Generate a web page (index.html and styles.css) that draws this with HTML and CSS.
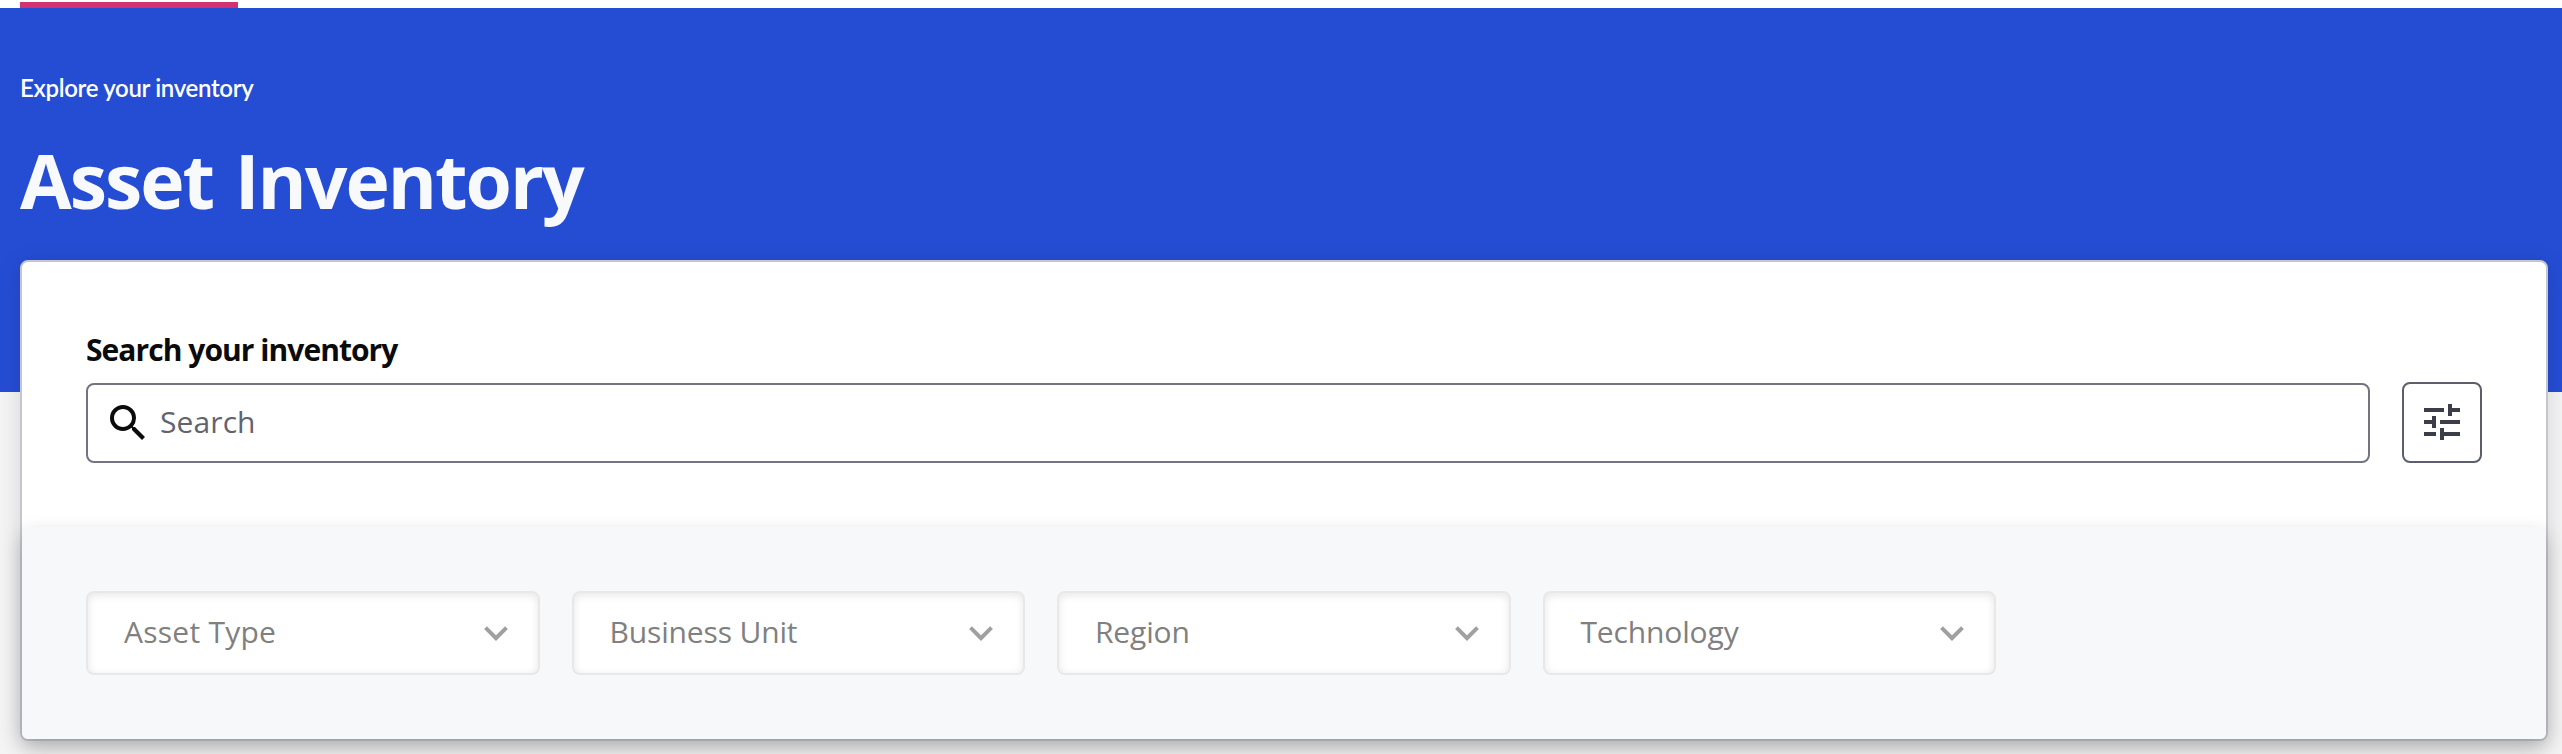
FILE: index.html
```
<!DOCTYPE html>
<html lang="en">
<head>
<meta charset="utf-8">
<title>Asset Inventory</title>
<link rel="stylesheet" href="styles.css">
</head>
<body>
<div class="tabs"><div class="tab-active"></div></div>
<header class="hero">
  <p class="eyebrow">Explore your inventory</p>
  <h1 class="title">Asset Inventory</h1>
</header>
<main class="card">
  <section class="search">
    <label class="label" for="q">Search your inventory</label>
    <div class="search-row">
      <div class="field">
        <svg class="icon" viewBox="0 0 24 24" fill="#0b0b0c"><path d="M15.5 14h-.79l-.28-.27A6.47 6.47 0 0 0 16 9.5 6.5 6.5 0 1 0 9.5 16c1.61 0 3.09-.59 4.23-1.57l.27.28v.79l5 4.99L20.49 19l-4.99-5zm-6 0C7.01 14 5 11.99 5 9.5S7.01 5 9.5 5 14 7.01 14 9.5 11.99 14 9.5 14z"/></svg>
        <input class="input" id="q" type="text" placeholder="Search">
      </div>
      <button class="tune" type="button" aria-label="Filters">
        <svg class="icon" viewBox="0 0 24 24" fill="#3b3d48"><path d="M3 17v2h6v-2H3zM3 5v2h10V5H3zm10 16v-2h8v-2h-8v-2h-2v6h2zM7 9v2H3v2h4v2h2V9H7zm14 4v-2H11v2h10zm-6-4h2V7h4V5h-4V3h-2v6z"/></svg>
      </button>
    </div>
  </section>
  <section class="filters">
    <div class="select"><span class="select-text select-wide">Asset Type</span><svg class="chevron" viewBox="0 0 24 15"><path d="M1.5 1.7 12 12.2 22.500 1.7"/></svg></div>
    <div class="select"><span class="select-text">Business Unit</span><svg class="chevron" viewBox="0 0 24 15"><path d="M1.5 1.7 12 12.2 22.500 1.7"/></svg></div>
    <div class="select"><span class="select-text">Region</span><svg class="chevron" viewBox="0 0 24 15"><path d="M1.5 1.7 12 12.2 22.500 1.7"/></svg></div>
    <div class="select"><span class="select-text">Technology</span><svg class="chevron" viewBox="0 0 24 15"><path d="M1.5 1.7 12 12.2 22.500 1.7"/></svg></div>
  </section>
</main>
</body>
</html>
```
FILE: styles.css
```
* { box-sizing: border-box; }
body {
  margin: 0;
  height: 754px;
  overflow: hidden;
  background: #f4f4f4;
  font-family: "Open Sans", Lato, sans-serif;
}
.tabs { height: 8px; padding: 2px 0 0 20px; background: #fff; }
.tab-active { width: 218px; height: 6px; background: #d0336f; }
.hero { height: 384px; padding: 65px 20px 0; background: #254dd4; }
.eyebrow {
  margin: 0 0 32px;
  color: #fff;
  font-family: Lato, sans-serif;
  font-size: 24px;
  font-weight: 600;
  line-height: 30px;
  letter-spacing: -0.32px;
}
.title {
  margin: 0;
  color: #f8f9fb;
  font-size: 75px;
  font-weight: 700;
  line-height: 90px;
  letter-spacing: -2px;
  word-spacing: 4px;
}
.card {
  position: relative;
  width: 2528px;
  height: 481px;
  margin: -132px 0 0 20px;
  border: 2px solid #c5c6cd;
  border-radius: 8px;
  background: #fff;
  box-shadow: 0 4px 24px rgba(0, 0, 0, .12);
}
.search { height: 265px; padding: 70px 64px 0; }
.label {
  display: block;
  margin-bottom: 14px;
  color: #0b0b0c;
  font-size: 30px;
  font-weight: 700;
  line-height: 36px;
  letter-spacing: -0.95px;
}
.search-row { display: flex; gap: 32px; }
.field {
  display: flex;
  align-items: center;
  flex: 1;
  height: 80px;
  margin-top: 1px;
  padding-left: 16px;
  border: 2px solid #727482;
  border-radius: 8px;
  background: #fff;
}
.icon { display: block; width: 48px; height: 48px; margin-top: -1px; }
.input {
  flex: 1;
  height: 76px;
  padding: 0 0 3px;
  margin-left: 8px;
  border: 0;
  outline: 0;
  background: transparent;
  font: 400 30px "Open Sans", Lato, sans-serif;
  letter-spacing: .1px;
}
.input::placeholder { color: #616370; opacity: 1; }
.tune {
  width: 80px;
  height: 81px;
  padding: 0 0 0 14px;
  border: 2px solid #5c5e6b;
  border-radius: 8px;
  background: #fff;
}
.filters {
  display: flex;
  gap: 32px;
  height: 212px;
  padding: 64px;
  border-radius: 6px;
  background: #f7f8fa;
  box-shadow: 0 8px 20px rgba(0, 0, 0, .22);
}
.select {
  display: flex;
  align-items: center;
  justify-content: space-between;
  width: 453.5px;
  height: 84px;
  padding: 0 30px 0 36px;
  border: 2px solid #e8e8e8;
  border-radius: 8px;
  background: #fff;
  box-shadow: inset 0 2px 8px rgba(0, 0, 0, .1);
}
.select-text {
  padding-bottom: 3px;
  color: #808080;
  font-size: 30px;
  line-height: 36px;
  letter-spacing: -0.15px;
}
.select-wide { letter-spacing: .25px; }
.chevron { width: 24px; height: 15px; fill: none; stroke: #a0a0a0; stroke-width: 4; }
```
